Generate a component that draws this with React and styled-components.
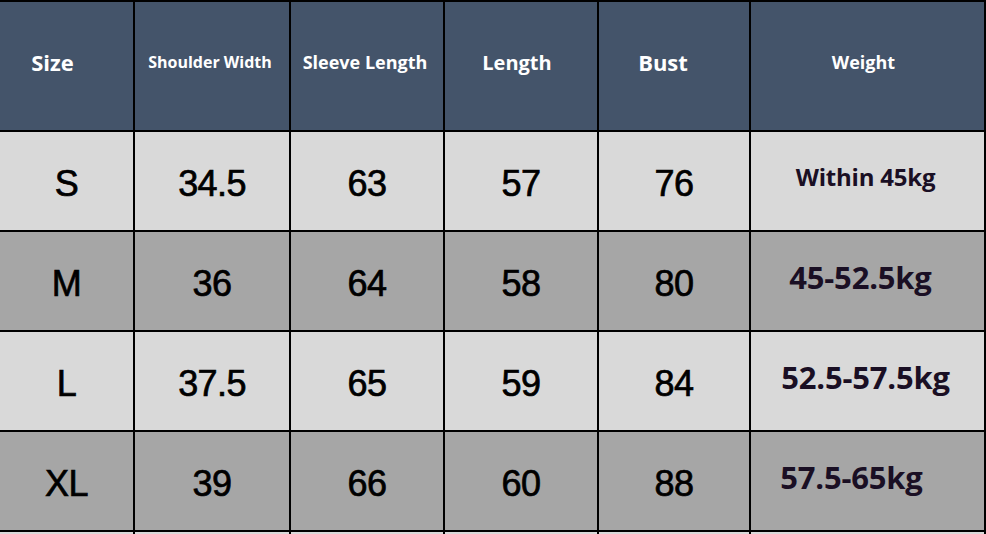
import React from "react";
import styled, { createGlobalStyle } from "styled-components";

const Global = createGlobalStyle`
  html, body { margin: 0; padding: 0; background: #d9d9d9; }
  body { width: 986px; height: 534px; overflow: hidden; }
`;

const Table = styled.div`
  display: grid;
  grid-template-columns: 133px 154px 152px 152px 150px 233px;
  grid-template-rows: 128px repeat(4, 98px) 10px;
  column-gap: 2px;
  row-gap: 2px;
  padding: 2px 2px 0 0;
  width: 986px;
  height: 534px;
  box-sizing: border-box;
  background: #000;
  overflow: hidden;
`;

const HeadCell = styled.div`
  background: #44546a;
  color: #ffffff;
  font-family: "Open Sans", "Noto Sans", sans-serif;
  font-weight: 700;
  font-size: ${(p) => p.$size}px;
  display: flex;
  align-items: center;
  justify-content: center;
  padding: 0 ${(p) => (p.$shift < 0 ? -p.$shift * 2 : 0)}px 8px ${(p) => (p.$shift > 0 ? p.$shift * 2 : 0)}px;
  white-space: nowrap;
`;

const Cell = styled.div`
  background: ${(p) => (p.$dark ? "#a6a6a6" : "#d9d9d9")};
  color: #000;
  font-family: "Liberation Sans", Arial, sans-serif;
  font-size: 36px;
  letter-spacing: -0.6px;
  -webkit-text-stroke: 0.7px #000;
  display: flex;
  align-items: center;
  justify-content: center;
  padding-top: 5px;
  white-space: nowrap;
`;

const WeightCell = styled(Cell)`
  color: #1a0f24;
  letter-spacing: -0.2px;
  -webkit-text-stroke: 0;
  font-family: "Open Sans", "Noto Sans", sans-serif;
  font-weight: 700;
  font-size: ${(p) => p.$size}px;
  padding: 0 ${(p) => (p.$shift < 0 ? -p.$shift * 2 : 0)}px 9px 0;
`;

const Filler = styled.div`
  background: ${(p) => (p.$dark ? "#a6a6a6" : "#d9d9d9")};
`;

const headers = [
  { t: "Size", s: 22, shift: -14 },
  { t: "Shoulder Width", s: 16, shift: -2 },
  { t: "Sleeve Length", s: 18, shift: -2 },
  { t: "Length", s: 20, shift: -4 },
  { t: "Bust", s: 22, shift: -11 },
  { t: "Weight", s: 18, shift: -4 },
];

const rows = [
  { v: ["S", "34.5", "63", "57", "76"], w: "Within 45kg", ws: 24, wshift: -2 },
  { v: ["M", "36", "64", "58", "80"], w: "45-52.5kg", ws: 31, wshift: -7 },
  { v: ["L", "37.5", "65", "59", "84"], w: "52.5-57.5kg", ws: 31, wshift: -2 },
  { v: ["XL", "39", "66", "60", "88"], w: "57.5-65kg", ws: 31, wshift: -16 },
];

export default function App() {
  return (
    <>
      <Global />
      <Table>
        {headers.map((h) => (
          <HeadCell key={h.t} $size={h.s} $shift={h.shift}>
            {h.t}
          </HeadCell>
        ))}
        {rows.map((r, i) => (
          <React.Fragment key={i}>
            {r.v.map((v, j) => (
              <Cell key={j} $dark={i % 2 === 1}>
                {v}
              </Cell>
            ))}
            <WeightCell $dark={i % 2 === 1} $size={r.ws} $shift={r.wshift}>
              {r.w}
            </WeightCell>
          </React.Fragment>
        ))}
        {Array.from({ length: 6 }).map((_, j) => (
          <Filler key={j} />
        ))}
      </Table>
    </>
  );
}
